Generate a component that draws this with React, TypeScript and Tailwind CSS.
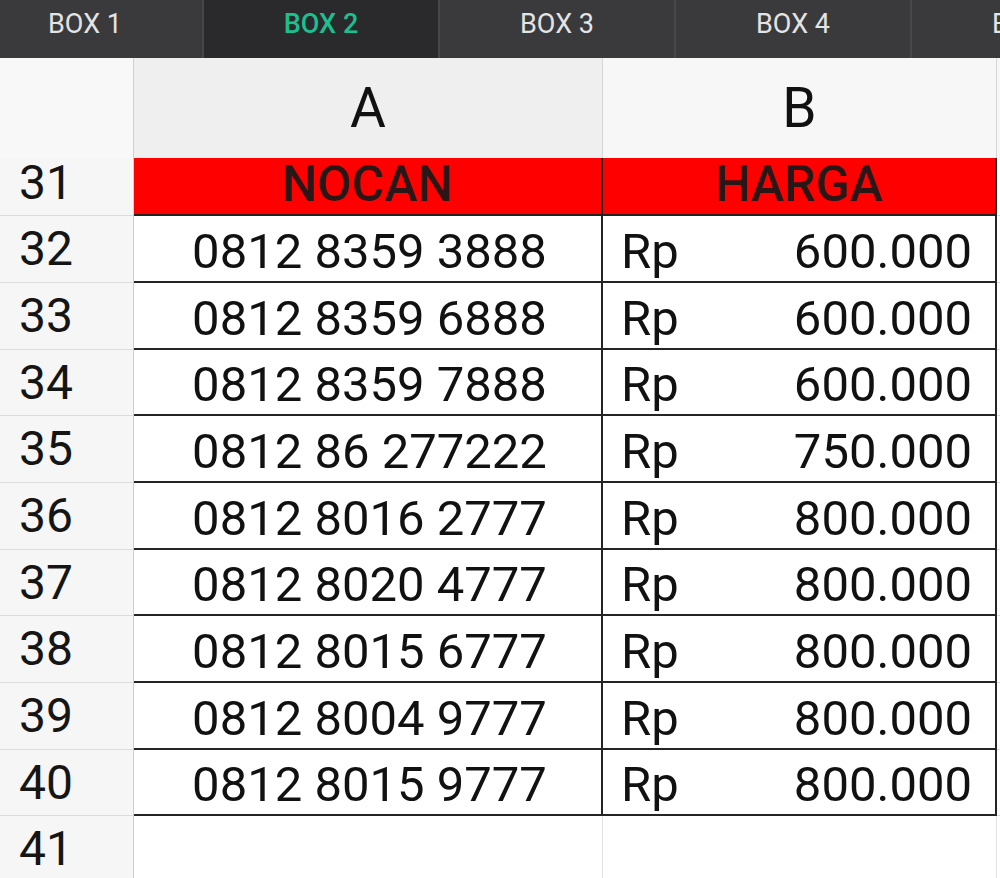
import React from "react";

const tabs = ["BOX 1", "BOX 2", "BOX 3", "BOX 4", "BOX 5"];

const rows = [
  { n: 32, nocan: "0812 8359 3888", harga: "600.000" },
  { n: 33, nocan: "0812 8359 6888", harga: "600.000" },
  { n: 34, nocan: "0812 8359 7888", harga: "600.000" },
  { n: 35, nocan: "0812 86 277222", harga: "750.000" },
  { n: 36, nocan: "0812 8016 2777", harga: "800.000" },
  { n: 37, nocan: "0812 8020 4777", harga: "800.000" },
  { n: 38, nocan: "0812 8015 6777", harga: "800.000" },
  { n: 39, nocan: "0812 8004 9777", harga: "800.000" },
  { n: 40, nocan: "0812 8015 9777", harga: "800.000" },
];

function RowNum({ n, className }: { n: number; className: string }) {
  return (
    <div
      className={`flex w-[134px] shrink-0 items-center border-r border-b border-r-[#cfcfcf] border-b-[#dcdcdc] bg-[#f6f6f6] pl-[19px] text-[48px] leading-none text-[#151515] ${className}`}
    >
      {n}
    </div>
  );
}

export default function App() {
  return (
    <div className="h-[878px] w-[1000px] overflow-hidden bg-white font-['Roboto','Liberation_Sans',sans-serif]">
      {/* Tab bar */}
      <div className="flex h-[58px] overflow-hidden bg-[#3a3a3c]">
        <div className="ml-[-32px] flex">
          {tabs.map((t, i) => (
            <div
              key={t}
              className={
                i === 1
                  ? "flex w-[236px] shrink-0 items-center justify-center border-r-2 border-[#47474a] bg-[#2a2a2c] pb-[10px] text-[27px] font-medium text-[#1cbf8e]"
                  : "flex w-[236px] shrink-0 items-center justify-center border-r-2 border-[#47474a] pb-[10px] text-[27px] text-[#e4e4e4]"
              }
            >
              {t}
            </div>
          ))}
        </div>
      </div>

      {/* Column headers */}
      <div className="flex h-[100px]">
        <div className="w-[134px] shrink-0 border-r border-[#d0d0d0] bg-[#f8f8f8]" />
        <div className="flex w-[469px] shrink-0 items-center justify-center border-r border-[#d6d6d6] bg-[#efefef] text-[55px] leading-none text-[#111]">
          A
        </div>
        <div className="flex w-[394px] shrink-0 items-center justify-center border-r border-[#d6d6d6] bg-[#f7f7f7] text-[55px] leading-none text-[#111]">
          B
        </div>
        <div className="flex-1 bg-[#f7f7f7]" />
      </div>

      {/* Row 31: header row */}
      <div className="flex h-[58px]">
        <RowNum n={31} className="pb-[8px]" />
        <div className="flex w-[469px] shrink-0 items-center justify-center border-r-2 border-b-2 border-[#222] bg-[#ff0000] pb-[4px] text-[50px] font-medium leading-none text-[#2a1616]">
          NOCAN
        </div>
        <div className="flex w-[394px] shrink-0 items-center justify-center border-r-2 border-b-2 border-[#222] bg-[#ff0000] pb-[4px] text-[50px] font-medium leading-none text-[#2a1616]">
          HARGA
        </div>
        <div className="flex-1 border-b border-[#dcdcdc]" />
      </div>

      {/* Data rows */}
      {rows.map((r, i) => (
        <div key={r.n} className={i % 3 === 2 ? "flex h-[66px]" : "flex h-[67px]"}>
          <RowNum n={r.n} className="" />
          <div className="flex w-[469px] shrink-0 items-center justify-center border-r-2 border-b-2 border-[#242424] pl-[4px] pt-[5px] text-[49px] leading-none text-[#111]">
            {r.nocan}
          </div>
          <div className="flex w-[394px] shrink-0 items-center justify-between border-r-2 border-b-2 border-[#242424] pl-[18px] pr-[23px] pt-[5px] text-[49px] leading-none text-[#111]">
            <span>Rp</span>
            <span>{r.harga}</span>
          </div>
          <div className="flex-1 border-b border-[#dcdcdc]" />
        </div>
      ))}

      {/* Row 41 */}
      <div className="flex h-[67px]">
        <RowNum n={41} className="" />
        <div className="w-[469px] shrink-0 border-r border-[#e2e2e2]" />
        <div className="w-[394px] shrink-0 border-r border-[#e2e2e2]" />
        <div className="flex-1" />
      </div>
    </div>
  );
}
